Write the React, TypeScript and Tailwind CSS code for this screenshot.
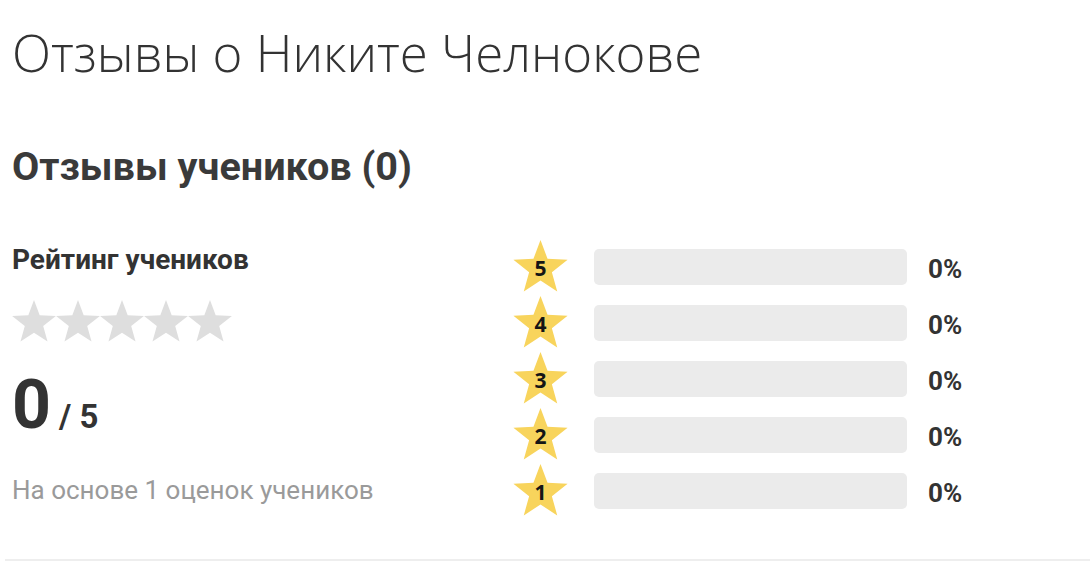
import React from "react";

const STAR =
  "M22 0L27.68 15.18L43.87 15.89L31.19 25.99L35.52 41.61L22 32.66L8.48 41.61L12.81 25.99L0.13 15.89L16.32 15.18Z";

function GrayStar() {
  return (
    <svg viewBox="0 0 44 42" className="w-[44px] h-[42px] shrink-0">
      <path d={STAR} fill="#dedede" />
    </svg>
  );
}

function NumStar({ n }: { n: number }) {
  return (
    <div className="relative w-[55px] h-[52px] shrink-0">
      <svg viewBox="0 0 44 42" className="w-full h-full">
        <path d={STAR} fill="#f8d45c" />
      </svg>
      <span className="absolute inset-0 flex items-center justify-center pt-[5px] font-['Open_Sans',sans-serif] text-[21px] font-bold text-[#151515]">
        {n}
      </span>
    </div>
  );
}

export default function App() {
  const rows = [5, 4, 3, 2, 1];
  return (
    <div className="bg-white w-[1090px] h-[574px] overflow-hidden font-['Roboto',sans-serif]">
      <div className="pl-[12px] pt-[22px]">
        <h1 className="font-['Open_Sans',sans-serif] font-light text-[51px] leading-[60px] text-[#333]">
          Отзывы о Никите Челнокове
        </h1>
        <h2 className="mt-[61px] text-[39.6px] leading-[48px] font-bold text-[#3a3a3a]">
          Отзывы учеников (0)
        </h2>
        <div className="flex mt-[49px]">
          <div className="w-[501px] shrink-0 pt-[4px]">
            <div className="text-[28px] leading-[32px] font-bold text-[#333]">
              Рейтинг учеников
            </div>
            <div className="flex mt-[24px]">
              {rows.map((r) => (
                <GrayStar key={r} />
              ))}
            </div>
            <div className="flex items-baseline mt-[29px] text-[#333] font-bold">
              <span className="text-[68px] leading-[68px]">0</span>
              <span className="ml-[8px] text-[33px] leading-[33px]">/ 5</span>
            </div>
            <div className="mt-[36px] text-[26px] leading-[30px] text-[#9a9a9a]">
              На основе 1 оценок учеников
            </div>
          </div>
          <div className="flex flex-col gap-[4px]">
            {rows.map((r) => (
              <div key={r} className="flex items-center h-[52px]">
                <NumStar n={r} />
                <div className="ml-[26px] mt-[2px] w-[313px] h-[36px] rounded-[5px] bg-[#ebebeb]" />
                <div className="ml-[21px] mt-[7px] text-[26px] font-bold text-[#333]">0%</div>
              </div>
            ))}
          </div>
        </div>
      </div>
      <div className="ml-[5px] mt-[43px] h-[2px] bg-[#eeeeee]" />
    </div>
  );
}
